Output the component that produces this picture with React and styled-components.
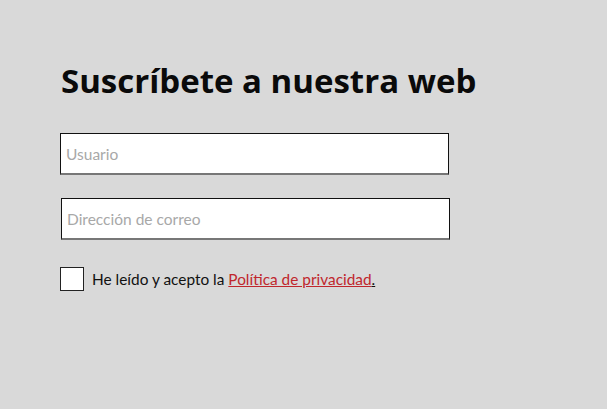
import styled, { createGlobalStyle } from "styled-components";

const GlobalStyle = createGlobalStyle`
  html, body {
    margin: 0;
    padding: 0;
    background: #d9d9d9;
  }
  body {
    font-family: Lato, "Noto Sans", sans-serif;
    color: #111;
  }
`;

function App() {
  return (
    <>
      <GlobalStyle />
      <Page>
        <Title>Suscríbete a nuestra web</Title>
        <Form>
          <Field type="text" placeholder="Usuario" />
          <Field type="email" placeholder="Dirección de correo" $shift />
          <Consent>
            <Box type="checkbox" />
            <span>
              He leído y acepto la <PolicyLink href="#">Política de privacidad</PolicyLink>
              <Dot>.</Dot>
            </span>
          </Consent>
        </Form>
      </Page>
    </>
  );
}

const Page = styled.div`
  width: 607px;
  height: 409px;
  box-sizing: border-box;
  padding: 58px 0 0 60px;
`;

const Title = styled.h1`
  margin: 0 0 29px 1px;
  font-family: "Open Sans", Lato, sans-serif;
  font-size: 33px;
  font-weight: 700;
  line-height: 46px;
  letter-spacing: 0;
  color: #0a0a0a;
`;

const Form = styled.form`
  display: flex;
  flex-direction: column;
  align-items: flex-start;
`;

const Field = styled.input`
  box-sizing: border-box;
  width: 389px;
  height: 42px;
  margin: 0 0 23px ${(p) => (p.$shift ? "1px" : "0")};
  padding: 0 5px;
  border: 1px solid #111;
  border-bottom: 2px solid #777;
  background: #fff;
  font-family: Lato, "Noto Sans", sans-serif;
  font-size: 15.5px;
  outline: none;

  &::placeholder {
    color: #a8a8a8;
  }
`;

const Consent = styled.label`
  display: flex;
  align-items: center;
  gap: 8px;
  margin-top: 4px;
  font-size: 15.4px;
  color: #111;
`;

const Box = styled.input`
  appearance: none;
  width: 24px;
  height: 24px;
  margin: 0;
  border: 1px solid #222;
  background: #fff;
  border-radius: 0;
`;

const PolicyLink = styled.a`
  color: #c0272d;
  text-decoration: underline;
`;

const Dot = styled.span`
  text-decoration: underline;
`;

export default App;
